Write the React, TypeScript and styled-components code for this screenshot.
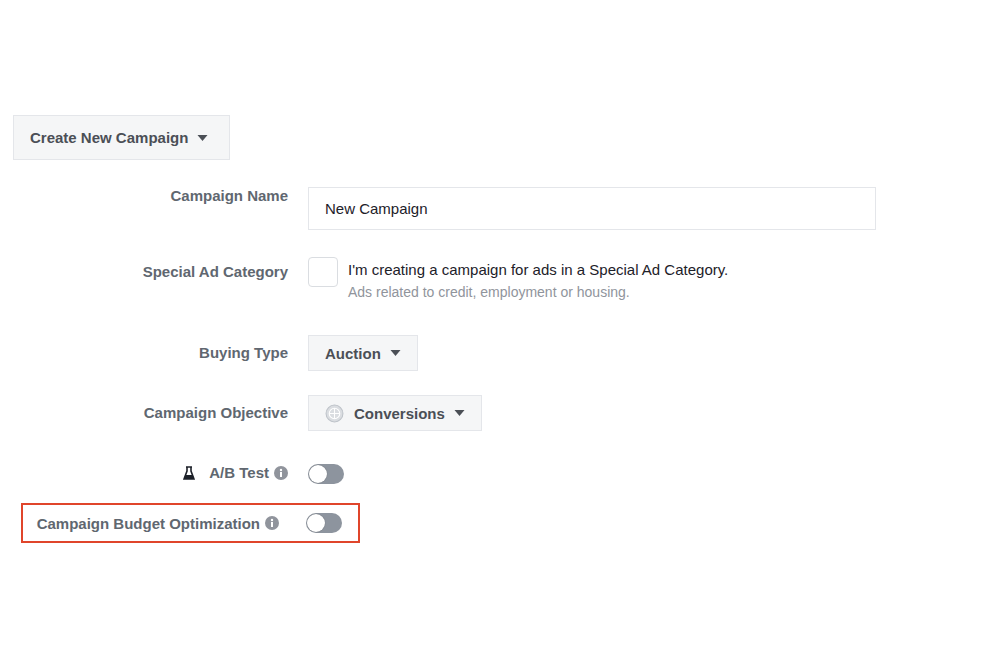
import React from 'react';
import styled, { createGlobalStyle } from 'styled-components';

const Global = createGlobalStyle`
  body { margin: 0; background: #fff; font-family: "Liberation Sans", Arial, sans-serif; }
`;

export default function App() {
  return (
    <Page>
      <Global />
      <CreateButton>
        Create New Campaign <Caret />
      </CreateButton>
      <Form>
        <Label $top={-4}>Campaign Name</Label>
        <TextInput>New Campaign</TextInput>

        <Label $top={6}>Special Ad Category</Label>
        <CheckRow>
          <Checkbox />
          <div>
            <CheckText>I'm creating a campaign for ads in a Special Ad Category.</CheckText>
            <Hint>Ads related to credit, employment or housing.</Hint>
          </div>
        </CheckRow>

        <Label $top={9}>Buying Type</Label>
        <Select>
          Auction <Caret />
        </Select>

        <Label $top={9}>Campaign Objective</Label>
        <Select>
          <Globe /> Conversions <Caret />
        </Select>

        <Label $top={0}>
          <Flask /> A/B Test <Info />
        </Label>
        <Toggle />
      </Form>
      <Highlight>
        <Label $top={0}>
          Campaign Budget Optimization <Info />
        </Label>
        <Toggle />
      </Highlight>
    </Page>
  );
}

const Caret = () => (
  <svg width="11" height="6" viewBox="0 0 10 6" style={{ marginLeft: 9 }}>
    <path d="M0 0h10L5 6z" fill="#4b4f56" />
  </svg>
);

const Info = () => (
  <svg width="14" height="14" viewBox="0 0 14 14" style={{ marginLeft: 5 }}>
    <circle cx="7" cy="7" r="7" fill="#90949c" />
    <rect x="6" y="6" width="2" height="5" fill="#fff" />
    <circle cx="7" cy="4" r="1.2" fill="#fff" />
  </svg>
);

const Flask = () => (
  <svg width="12" height="14" viewBox="0 0 12 14" style={{ marginRight: 14 }}>
    <path d="M3 1h6M4 1v4L1 13h10L8 5V1" fill="none" stroke="#1d2129" strokeWidth="1.6" />
    <path d="M2.5 9h7l1.5 4H1z" fill="#1d2129" />
  </svg>
);

const Globe = () => (
  <svg width="19" height="19" viewBox="0 0 18 18" style={{ marginRight: 10 }}>
    <circle cx="9" cy="9" r="8" fill="#dadde1" stroke="#bec3c9" />
    <circle cx="9" cy="9" r="5" fill="none" stroke="#fff" strokeWidth="1" />
    <path d="M4 9h10M9 4v10" stroke="#fff" strokeWidth="1" />
  </svg>
);

const Page = styled.div`
  padding: 115px 0 0 13px;
`;

const CreateButton = styled.div`
  display: inline-flex;
  align-items: center;
  width: 217px;
  height: 45px;
  box-sizing: border-box;
  padding-left: 16px;
  background: #f5f6f7;
  border: 1px solid #e4e6ea;
  font-size: 15px;
  font-weight: 700;
  color: #4b4f56;
`;

const Form = styled.div`
  display: grid;
  grid-template-columns: 275px 568px;
  column-gap: 20px;
  margin-top: 27px;
  align-items: start;
  & > :nth-child(2) { margin-bottom: 27px; }
  & > :nth-child(4) { margin-bottom: 35px; }
  & > :nth-child(6) { margin-bottom: 24px; }
  & > :nth-child(8) { margin-bottom: 33px; }
`;

const Label = styled.div<{ $top: number }>`
  display: flex;
  align-items: center;
  justify-content: flex-end;
  padding-top: ${p => p.$top}px;
  font-size: 15px;
  font-weight: 700;
  color: #606770;
  white-space: nowrap;
`;

const TextInput = styled.div`
  height: 43px;
  box-sizing: border-box;
  border: 1px solid #e4e6ea;
  padding: 0 16px;
  display: flex;
  align-items: center;
  font-size: 15px;
  color: #1d2129;
`;

const CheckRow = styled.div`
  display: flex;
  gap: 10px;
`;

const Checkbox = styled.div`
  width: 30px;
  height: 30px;
  box-sizing: border-box;
  border: 1px solid #dadde1;
  border-radius: 4px;
  flex: none;
`;

const CheckText = styled.div`
  font-size: 15px;
  color: #1d2129;
  margin-top: 4px;
`;

const Hint = styled.div`
  font-size: 14px;
  color: #90949c;
  margin-top: 6px;
`;

const Select = styled.div`
  justify-self: start;
  display: inline-flex;
  align-items: center;
  height: 36px;
  box-sizing: border-box;
  padding: 0 16px;
  background: #f5f6f7;
  border: 1px solid #e4e6ea;
  font-size: 15px;
  font-weight: 700;
  color: #4b4f56;
`;

const Toggle = styled.div`
  width: 36px;
  height: 20px;
  border-radius: 10px;
  background: #8d949e;
  position: relative;
  &::after {
    content: '';
    position: absolute;
    left: 1px;
    top: 1px;
    width: 18px;
    height: 18px;
    border-radius: 50%;
    background: #fff;
    box-shadow: 0 0 1px rgba(0,0,0,0.4);
  }
`;

const Highlight = styled.div`
  display: grid;
  grid-template-columns: 256px 36px;
  column-gap: 27px;
  align-items: center;
  margin: 19px 0 0 8px;
  width: 339px;
  height: 40px;
  box-sizing: border-box;
  border: 2px solid #e0452b;
`;
